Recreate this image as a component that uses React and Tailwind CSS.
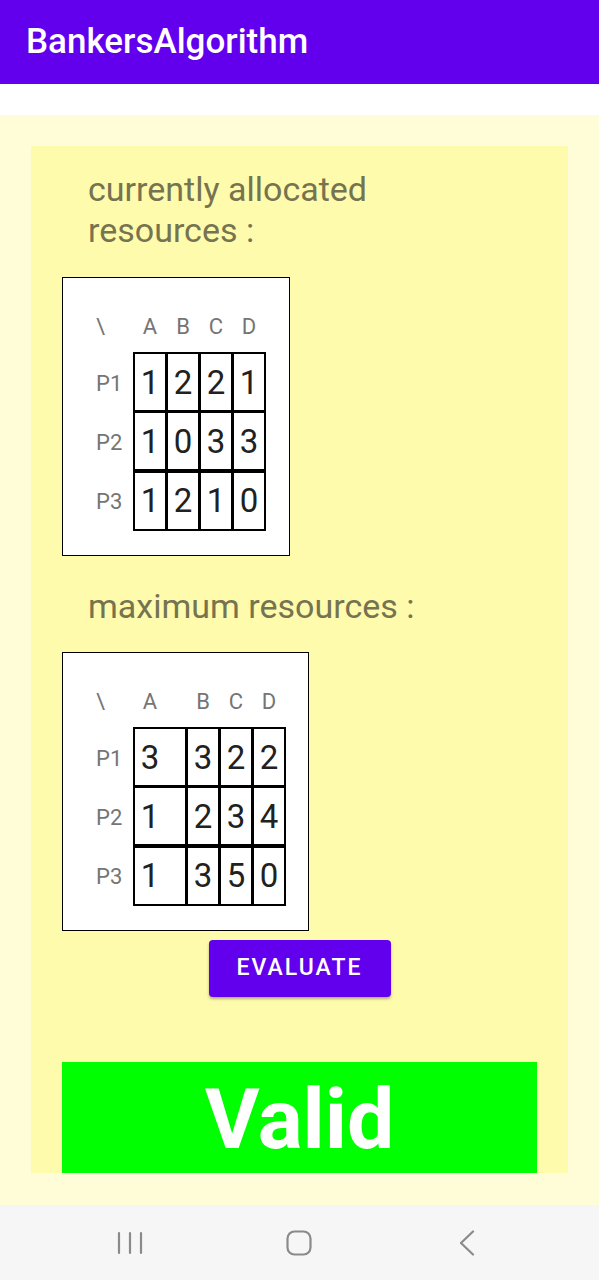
import React from 'react';

const allocated = [
  [1, 2, 2, 1],
  [1, 0, 3, 3],
  [1, 2, 1, 0],
];

const maximum = [
  [3, 3, 2, 2],
  [1, 2, 3, 4],
  [1, 3, 5, 0],
];

const cols = ['A', 'B', 'C', 'D'];

// Matrix box: header letters, row labels and bordered grid of values
const Matrix = ({ data, widths, boxWidth }) => {
  const template = widths.map((w) => `${w}px`).join(' ');
  return (
    <div
      className="ml-[31px] h-[279px] border border-black bg-white pt-[37px]"
      style={{ width: boxWidth }}
    >
      <div className="flex h-[24px] items-center text-[22px] leading-[24px] text-[#757575]">
        <div className="w-[70px] pl-[33px]">\</div>
        <div className="grid pl-[2px]" style={{ gridTemplateColumns: template, columnGap: 3 }}>
          {cols.map((c, i) => (
            <div key={c} className={i === 0 ? 'w-[30px] text-center' : 'text-center'}>
              {c}
            </div>
          ))}
        </div>
      </div>

      <div className="mt-[13px] flex">
        <div className="flex w-[70px] flex-col pt-[2px]">
          {data.map((_, r) => (
            <div
              key={r}
              className="mb-[3px] flex h-[56px] items-center pl-[33px] pt-[2px] text-[22px] text-[#757575]"
            >
              P{r + 1}
            </div>
          ))}
        </div>
        <div
          className="grid bg-black p-[2px]"
          style={{ gridTemplateColumns: template, gap: 3 }}
        >
          {data.flat().map((v, i) => (
            <div key={i} className="flex h-[56px] items-center bg-white">
              <div className="w-[30px] text-center text-[33px] leading-none text-[#212121]">
                {v}
              </div>
            </div>
          ))}
        </div>
      </div>
    </div>
  );
};

const App = () => {
  return (
    <div className="flex h-[1280px] w-[599px] flex-col overflow-hidden bg-white font-['Roboto',sans-serif]">
      {/* App bar */}
      <div className="flex h-[84px] shrink-0 items-center bg-[#6200EE] pl-[26px] shadow-md">
        <span className="text-[35px] font-medium text-white">BankersAlgorithm</span>
      </div>

      <div className="h-[31px] shrink-0 bg-white" />

      {/* Content */}
      <div className="h-[1090px] shrink-0 bg-[#FFFDD8] px-[31px] pt-[31px]">
        <div className="h-[1027px] w-[537px] overflow-hidden bg-[#FFFBAC] pt-[23px]">
          <p className="pl-[57px] text-[34px] leading-[41px] text-[#757350]">
            currently allocated
            <br />
            resources :
          </p>

          <div className="mt-[26px]">
            <Matrix data={allocated} widths={[30, 30, 30, 30]} boxWidth={228} />
          </div>

          <p className="mt-[30px] pl-[57px] text-[34px] leading-[41px] text-[#757350]">
            maximum resources :
          </p>

          <div className="mt-[25px]">
            <Matrix data={maximum} widths={[50, 30, 30, 30]} boxWidth={247} />
          </div>

          <button className="mx-auto mt-[9px] flex h-[57px] w-[182px] items-center justify-center rounded-[4px] bg-[#6200EE] text-[23px] font-medium tracking-[2px] text-white shadow-[0_2px_3px_rgba(0,0,0,0.3)]">
            EVALUATE
          </button>

          <div className="ml-[31px] mt-[65px] h-[130px] w-[475px] bg-[#00FF00] pt-[16px] text-center text-[84px] font-bold leading-none text-white">
            Valid
          </div>
        </div>
      </div>

      {/* System nav bar */}
      <div className="flex h-[75px] shrink-0 items-center bg-[#F6F6F6]">
        <div className="flex w-full items-center">
          <svg className="ml-[117px]" width="26" height="24" viewBox="0 0 26 24">
            <path d="M2 2v20M13 2v20M24 2v20" stroke="#8a8a8a" strokeWidth="2.2" strokeLinecap="round" />
          </svg>
          <svg className="ml-[143px]" width="26" height="26" viewBox="0 0 26 26">
            <rect x="1.5" y="1.5" width="23" height="23" rx="7" fill="none" stroke="#8a8a8a" strokeWidth="2.2" />
          </svg>
          <svg className="ml-[147px]" width="16" height="26" viewBox="0 0 16 26">
            <path d="M14 1.5L2 13l12 11.5" fill="none" stroke="#8a8a8a" strokeWidth="2.2" strokeLinecap="round" strokeLinejoin="round" />
          </svg>
        </div>
      </div>
    </div>
  );
};

export default App;
